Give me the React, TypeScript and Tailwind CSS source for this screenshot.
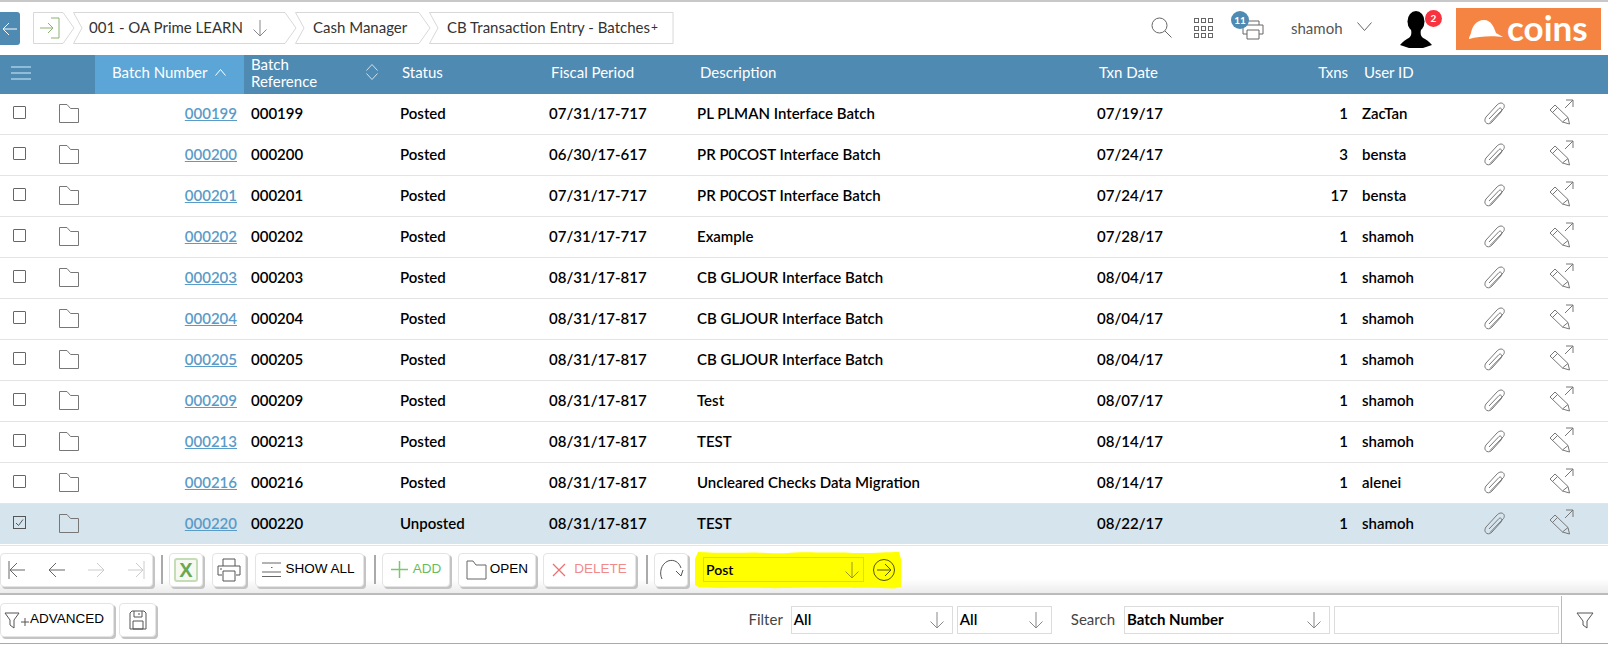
import { ReactNode } from 'react';

const rows = [
  ['000199', 'Posted', '07/31/17-717', 'PL PLMAN Interface Batch', '07/19/17', '1', 'ZacTan'],
  ['000200', 'Posted', '06/30/17-617', 'PR P0COST Interface Batch', '07/24/17', '3', 'bensta'],
  ['000201', 'Posted', '07/31/17-717', 'PR P0COST Interface Batch', '07/24/17', '17', 'bensta'],
  ['000202', 'Posted', '07/31/17-717', 'Example', '07/28/17', '1', 'shamoh'],
  ['000203', 'Posted', '08/31/17-817', 'CB GLJOUR Interface Batch', '08/04/17', '1', 'shamoh'],
  ['000204', 'Posted', '08/31/17-817', 'CB GLJOUR Interface Batch', '08/04/17', '1', 'shamoh'],
  ['000205', 'Posted', '08/31/17-817', 'CB GLJOUR Interface Batch', '08/04/17', '1', 'shamoh'],
  ['000209', 'Posted', '08/31/17-817', 'Test', '08/07/17', '1', 'shamoh'],
  ['000213', 'Posted', '08/31/17-817', 'TEST', '08/14/17', '1', 'shamoh'],
  ['000216', 'Posted', '08/31/17-817', 'Uncleared Checks Data Migration', '08/14/17', '1', 'alenei'],
  ['000220', 'Unposted', '08/31/17-817', 'TEST', '08/22/17', '1', 'shamoh'],
];

const cols = 'grid grid-cols-[45px_50px_149px_149px_149px_148px_400px_200px_65px_105px_70px_78px]';

function Ico({ w, h, children, color = '#666' }: { w: number; h: number; children: ReactNode; color?: string }) {
  return (
    <svg width={w} height={h} viewBox={`0 0 ${w} ${h}`} fill="none" stroke={color} strokeWidth="1" className="shrink-0">
      {children}
    </svg>
  );
}

const FolderIcon = () => (
  <Ico w={22} h={21}>
    <path d="M1.5 19.5V1.5H9L12.5 5.5H20.5V19.5Z" stroke="#777" />
  </Ico>
);

const ClipIcon = () => (
  <Ico w={24} h={23}>
    <path d="M7 20.5L20.5 6.5C22.5 3.5 20.5 1 18 1C16.5 1 15 2 14 3L3 15C1 18 2 20.5 4 21.5C6 22.5 8 21 9 20L18.5 9.5C19.5 7.5 18 5 16 6.5L6 17" stroke="#777" />
  </Ico>
);

const EditIcon = () => (
  <Ico w={26} h={26}>
    <path d="M16 9L24 1M17 1H24V8" stroke="#777" />
    <path d="M1 11L6 6L19 18.5L20.5 25L13.5 23ZM3.500 13.500L8.500 8.500M13.500 23L19 18.500" stroke="#777" />
  </Ico>
);

function Crumb({ w, first, last, children }: { w: number; first?: boolean; last?: boolean; children?: ReactNode }) {
  const right = last ? `${w - 1},0.5 ${w - 1},31.5` : `${w - 10},0.5 ${w + 1},16 ${w - 10},31.5`;
  const left = first ? '0.5,31.5' : '0.5,31.5 9,16';
  return (
    <div className="relative h-[32px] shrink-0 flex items-center" style={{ width: w }}>
      <svg width={w + 2} height={32} className="absolute inset-0">
        <polygon points={`0.5,0.5 ${right} ${left}`} fill="white" stroke="#d8d8d8" />
      </svg>
      <div className="relative flex items-center -mt-[2px]">{children}</div>
    </div>
  );
}

function ToolBtn({ w, children, className = '' }: { w: number; children: ReactNode; className?: string }) {
  return (
    <div
      className={`h-[34px] shrink-0 flex items-center justify-center rounded-[4px] bg-white border border-[#e4e4e4] shadow-[2px_2px_0_#c4c4c4] font-['Liberation_Sans',sans-serif] text-[13.5px] ${className}`}
      style={{ width: w }}
    >
      {children}
    </div>
  );
}

const Divider = ({ className = '' }: { className?: string }) => <div className={`w-[2px] h-[29px] bg-[#aaa] shrink-0 ${className}`} />;

const DownArrow = ({ color = '#888' }: { color?: string }) => (
  <Ico w={16} h={18} color={color}>
    <path d="M8 1V17M1.5 10.5L8 17L14.5 10.5" />
  </Ico>
);

function SelectBox({ w, label, bold }: { w: number; label: string; bold?: boolean }) {
  return (
    <div
      className={`h-[28px] shrink-0 flex items-center justify-between pl-[2px] pr-[7px] border border-[#dcdcdc] text-[15px] text-black ${bold ? 'font-bold' : 'font-semibold'}`}
      style={{ width: w }}
    >
      <span>{label}</span>
      <DownArrow />
    </div>
  );
}

export default function App() {
  return (
    <div className="w-[1608px] h-[645px] overflow-hidden bg-white flex flex-col font-['Lato',sans-serif] text-[15px] border-t-2 border-[#c8c8c8]">
      {/* top bar */}
      <div className="h-[53px] flex items-start shrink-0 relative">
        <div className="mt-[10px] w-[20px] h-[33px] bg-[#4f8ab3] rounded-r-[3px] flex items-center justify-center">
          <Ico w={16} h={16} color="#fff">
            <path d="M15 8H1M7 2L1 8L7 14" />
          </Ico>
        </div>
        <div className="ml-[13px] mt-[10px] flex text-[#333]">
          <Crumb w={40} first>
            <div className="pl-[7px] mt-[2px]">
              <Ico w={20} h={22} color="#8bb174">
                <path d="M0 11H13M8 6L13 11L8 16M11 1H19V21H11" />
              </Ico>
            </div>
          </Crumb>
          <Crumb w={222}>
            <span className="pl-[16px] whitespace-nowrap">001 - OA Prime LEARN</span>
            <span className="ml-[9px] mt-[2px]"><DownArrow /></span>
          </Crumb>
          <Crumb w={134}>
            <span className="pl-[18px] whitespace-nowrap">Cash Manager</span>
          </Crumb>
          <Crumb w={245} last>
            <span className="pl-[18px] whitespace-nowrap">CB Transaction Entry - Batches</span>
            <span className="text-[12px] ml-[1px]">+</span>
          </Crumb>
        </div>
        <div className="flex-1" />
        <div className="mt-[15px] mr-[22px]">
          <Ico w={21} h={21}>
            <circle cx="8.5" cy="8.5" r="7.5" />
            <path d="M14 14L20.5 20.5" />
          </Ico>
        </div>
        <div className="mt-[16px] mr-[29px] w-[19px] h-[19px] grid grid-cols-3 gap-[2.5px]">
          {Array.from({ length: 9 }).map((_, i) => (
            <div key={i} className="border border-[#666] w-[5px] h-[5px]" />
          ))}
        </div>
        <div className="relative mt-[18px] mr-[27px]">
          <Ico w={22} h={20}>
            <path d="M5 14H1V5H21V14H17M5 5V1H17V5M5 10H17V19H5Z" />
          </Ico>
          <div className="absolute left-[-11px] top-[-9px] w-[18px] h-[18px] rounded-full bg-[#4f8ab3] text-white text-[10px] font-bold flex items-center justify-center">11</div>
        </div>
        <span className="mt-[15px] text-[15px] text-[#555] w-[66px]">shamoh</span>
        <div className="mt-[20px] mr-[28px]">
          <Ico w={15} h={9}>
            <path d="M0.5 0.5L7.5 8.5L14.5 0.5" />
          </Ico>
        </div>
        <div className="relative mt-[9px] mr-[24px]">
          <svg width="32" height="37" viewBox="0 0 32 37" fill="#000">
            <ellipse cx="16" cy="10.5" rx="8.5" ry="10.5" />
            <path d="M11 18C12 24 11 26 7 28C3 30 1 33 0 34L9 37H23L32 34C31 33 29 30 25 28C21 26 20 24 21 18Z" />
          </svg>
          <div className="absolute left-[25px] top-[-1px] w-[17px] h-[17px] rounded-full bg-[#f8333f] text-white text-[10px] font-bold flex items-center justify-center">2</div>
        </div>
        <div className="mt-[6px] mr-[7px] w-[145px] h-[42px] bg-[#f58442] flex items-center pl-[13px] gap-[4px] text-white">
          <svg width="34" height="19" viewBox="0 0 34 19" fill="#fff" className="shrink-0">
            <path d="M0 18L2 13C3 7 7 0 15 0C22 0 25 7 27 13L34 17C24 15.500 10 16 0 19Z" />
          </svg>
          <span className="text-[35px] leading-none font-bold -mt-[4px]">coins</span>
        </div>
      </div>

      {/* grid head */}
      <div className={`${cols} h-[39px] bg-[#4f8ab3] text-white shrink-0 items-center`}>
        <div className="pl-[10px] pb-[4px]">
          <Ico w={22} h={18} color="#8fbcd8">
            <path d="M1 3H21M1 9H21M1 15H21" strokeWidth="2" />
          </Ico>
        </div>
        <div />
        <div className="bg-[#5ba6d6] h-full flex items-center pl-[17px] pb-[4px] gap-[8px]">
          <span>Batch Number</span>
          <Ico w={11} h={7} color="#fff">
            <path d="M0.5 6.5L5.5 0.5L10.500 6.5" />
          </Ico>
        </div>
        <div className="h-full flex items-center pl-[7px] justify-between pr-[15px]">
          <span className="leading-[17px] w-[80px] pb-[4px]">Batch Reference</span>
          <svg width="12" height="16" viewBox="0 0 12 16" fill="none" stroke="#cfe0ec" className="mb-[6px]">
            <path d="M0.5 6.5L6 0.5L11.5 6.5M0.5 9.5L6 15.5L11.5 9.5" />
          </svg>
        </div>
        <div className="pl-[9px] pb-[4px]">Status</div>
        <div className="pl-[9px] pb-[4px]">Fiscal Period</div>
        <div className="pl-[10px] pb-[4px]">Description</div>
        <div className="pl-[9px] pb-[4px]">Txn Date</div>
        <div className="text-right pr-[7px] pb-[4px]">Txns</div>
        <div className="pl-[9px] pb-[4px]">User ID</div>
        <div />
        <div />
      </div>

      {/* rows */}
      <div className="shrink-0 h-[451px]">
        {rows.map((r) => {
          const selected = r[0] === '000220';
          return (
            <div
              key={r[0]}
              className={`${cols} h-[41px] pb-[2px] items-center font-semibold text-[15px] text-black border-b ${selected ? 'bg-[#d5e4ed] border-white' : 'border-[#e4e4e4]'}`}
            >
              <div className="pl-[13px] flex -mt-[2px]">
                {selected ? (
                  <Ico w={13} h={13} color="#555">
                    <rect x="0.5" y="0.5" width="12" height="12" />
                    <path d="M3 7L5.5 9.5L10 3.5" />
                  </Ico>
                ) : (
                  <div className="w-[13px] h-[13px] border border-[#666] rounded-[1px]" />
                )}
              </div>
              <div className="pl-[13px] flex"><FolderIcon /></div>
              <div className="text-right pr-[7px]">
                <a className="text-[#5a9bc8] underline">{r[0]}</a>
              </div>
              <div className="pl-[7px]">{r[0]}</div>
              <div className="pl-[7px]">{r[1]}</div>
              <div className="pl-[7px]">{r[2]}</div>
              <div className="pl-[7px]">{r[3]}</div>
              <div className="pl-[7px]">{r[4]}</div>
              <div className="text-right pr-[7px]">{r[5]}</div>
              <div className="pl-[7px]">{r[6]}</div>
              <div className="pl-[23px] flex"><ClipIcon /></div>
              <div className="pl-[19px] flex -mt-[2px]"><EditIcon /></div>
            </div>
          );
        })}
      </div>

      {/* action toolbar */}
      <div className="h-[50px] shrink-0 flex items-center gap-[8px] bg-gradient-to-b from-white from-70% to-[#ececec] border-t border-[#e4e4e4] border-b-2 border-b-[#bbb]">
        <ToolBtn w={153} className="justify-between! px-[7px]">
          <Ico w={18} h={20}>
            <path d="M1 1V19M17 10H2M9 3L2 10L9 17" />
          </Ico>
          <Ico w={18} h={18}>
            <path d="M17 9H1M8 2L1 9L8 16" />
          </Ico>
          <Ico w={18} h={18} color="#ccc">
            <path d="M1 9H17M10 2L17 9L10 16" />
          </Ico>
          <Ico w={18} h={20} color="#ccc">
            <path d="M17 1V19M1 10H16M9 3L16 10L9 17" />
          </Ico>
        </ToolBtn>
        <Divider className="-mr-[2px]" />
        <ToolBtn w={34}>
          <div className="w-[24px] h-[24px] border-2 border-[#c5dcb5] bg-[#f5f9f1] rounded-[3px] flex items-center justify-center text-[#6aa84f] font-bold text-[20px]">X</div>
        </ToolBtn>
        <ToolBtn w={34} className="ml-[1px]">
          <Ico w={24} h={24} color="#555">
            <path d="M5 17H1V8H23V17H19M6 8V1H18V8M6 13H18V23H6ZM3 11H5" />
          </Ico>
        </ToolBtn>
        <ToolBtn w={109} className="gap-[4px] text-black ml-[1px] pr-[2px]">
          <Ico w={19} h={16}>
            <path d="M0 1H19M9 5.500H10.500M0 10H19M0 14.500H19" stroke="#666" />
          </Ico>
          <span>SHOW ALL</span>
        </ToolBtn>
        <Divider className="ml-[2px] -mr-[2px]" />
        <ToolBtn w={68} className="gap-[5px] text-[#69bb5b]">
          <Ico w={17} h={17} color="#7cc66e">
            <path d="M8.5 0V17M0 8.5H17" strokeWidth="1.5" />
          </Ico>
          <span>ADD</span>
        </ToolBtn>
        <ToolBtn w={78} className="gap-[3px] text-black">
          <Ico w={21} h={20}>
            <path d="M1 19V1H7L10 5H20V19Z" />
          </Ico>
          <span>OPEN</span>
        </ToolBtn>
        <ToolBtn w={93} className="gap-[8px] text-[#f28a8a] -ml-[1px]">
          <Ico w={14} h={14} color="#ef7070">
            <path d="M1 1L13 13M13 1L1 13" strokeWidth="1.3" />
          </Ico>
          <span>DELETE</span>
        </ToolBtn>
        <Divider className="ml-[2px] -mr-[2px]" />
        <ToolBtn w={34}>
          <Ico w={25} h={22} color="#555">
            <path d="M3 20C0 14 2 5 9 2C15 0 20 3 22 9" />
            <path d="M17 12L22 17L24 11" />
          </Ico>
        </ToolBtn>
        {/* highlighter mark round the action select */}
        <div className="relative h-[38px] w-[207px] ml-[-1px] shrink-0 flex items-center pl-[8px]">
          <svg width="207" height="38" viewBox="0 0 207 38" fill="#ffff00" className="absolute inset-0">
            <path d="M3 1C20 2 40 2 60 1.500C80 2 85 3 100 1.500C115 0.500 125 2 150 1.500C170 3 190 1 204 1L206 8V36L199 37.500C185 37 175 36.500 160 37C150 36 135 37 120 36.500C100 36.500 90 37.500 70 37C50 36.500 30 37.500 4 36.500L0 34V8Z" />
          </svg>
          <div className="relative h-[25px] w-[161px] border border-[#e0e000] flex items-center justify-between pl-[2px] pr-[3px] text-[14px] font-semibold text-black">
            <span>Post</span>
            <DownArrow color="#99991a" />
          </div>
          <div className="relative ml-[9px]">
            <Ico w={22} h={22} color="#555500">
              <circle cx="11" cy="11" r="10.5" />
              <path d="M4 11H18M12 5L18 11L12 17" />
            </Ico>
          </div>
        </div>
      </div>

      {/* filter bar */}
      <div className="h-[49px] shrink-0 flex items-center pt-[1px] border-b border-[#aaa]">
        <ToolBtn w={114} className="justify-start! pl-[3px] text-black">
          <Ico w={26} h={20} color="#555">
            <path d="M1 3H15L10 10V18L6 15V10ZM17 12H25M21 8V16" />
          </Ico>
          <span>ADVANCED</span>
        </ToolBtn>
        <ToolBtn w={37} className="ml-[5px]">
          <Ico w={18} h={20} color="#555">
            <path d="M1 3L3 1H15L17 3V19H1ZM5 1V7H13V1M4 11H14V19H4ZM10 3V5" />
          </Ico>
        </ToolBtn>
        <div className="flex-1" />
        <span className="text-[15px] text-[#444] mr-[8px]">Filter</span>
        <SelectBox w={162} label="All" />
        <div className="w-[4px]" />
        <SelectBox w={95} label="All" />
        <span className="text-[15px] text-[#444] ml-[19px] mr-[9px]">Search</span>
        <SelectBox w={206} label="Batch Number" bold />
        <div className="w-[4px]" />
        <div className="w-[225px] h-[28px] border border-[#dcdcdc]" />
        <div className="ml-[2px] w-[47px] h-full border-l border-[#bbb] flex items-center justify-center">
          <Ico w={18} h={18} color="#555">
            <path d="M1 2H17L11 10V17L7 14V10Z" />
          </Ico>
        </div>
      </div>
    </div>
  );
}
